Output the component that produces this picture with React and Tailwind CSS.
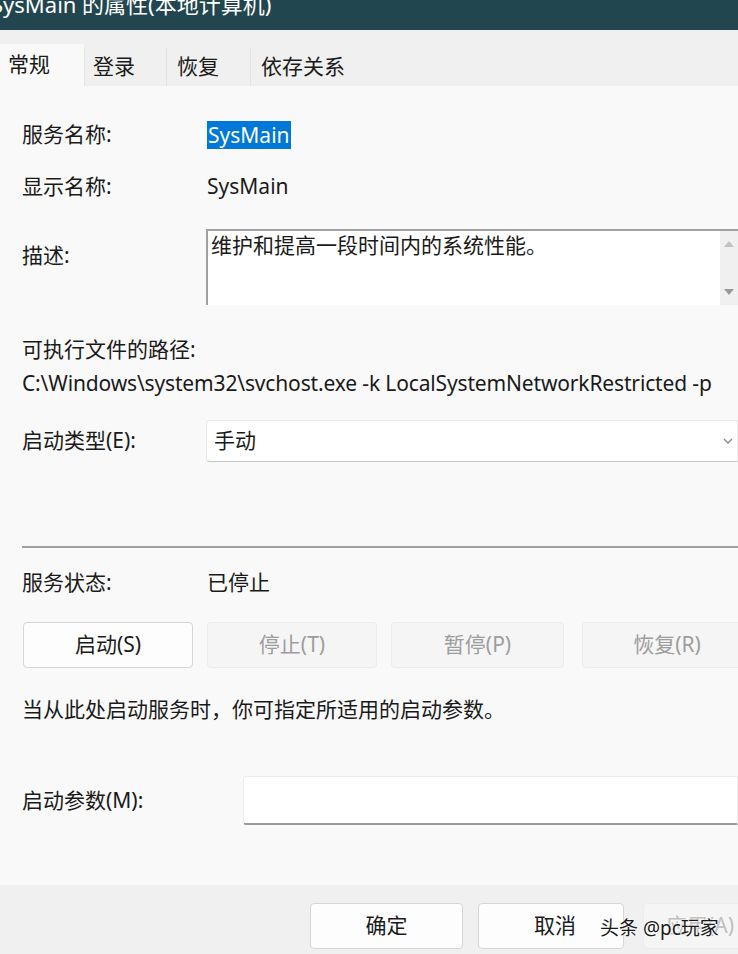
const font = { fontFamily: '"Noto Sans", "Noto Sans CJK SC", sans-serif' }

function Tab({ label, active, w, pl }) {
  return (
    <div
      className={
        active
          ? 'h-[42px] flex items-center bg-[#f9f9f9] text-[#1a1a1a] mt-[14px] self-start shrink-0'
          : 'h-[38px] flex items-center bg-[#f0f0f0] border-l border-[#e3e3e3] text-[#1a1a1a] mt-[18px] self-start shrink-0'
      }
      style={{ width: w, paddingLeft: pl }}
    >
      {label}
    </div>
  )
}

function Btn({ label, disabled, className }) {
  return (
    <div
      className={
        'h-[46px] shrink-0 flex items-center justify-center rounded-[4px] border ' +
        (disabled
          ? 'border-[#ececec] bg-[#f5f5f5] text-[#9d9d9d] '
          : 'border-[#d6d6d6] bg-[#fdfdfd] text-[#1a1a1a] ') +
        className
      }
    >
      {label}
    </div>
  )
}

export default function App() {
  return (
    <div className="w-[738px] h-[954px] overflow-hidden flex flex-col bg-[#f9f9f9] text-[21px] text-[#1a1a1a]" style={font}>
      <div className="h-[30px] bg-[#21464f] text-white overflow-hidden shrink-0">
        <div className="-mt-[14px] -ml-[9px] text-[22px] leading-[36px] whitespace-nowrap">SysMain 的属性(本地计算机)</div>
      </div>
      <div className="h-[56px] bg-[#f0f0f0] flex shrink-0">
        <Tab label="常规" active w={84} pl={8} />
        <Tab label="登录" w={82} pl={8} />
        <Tab label="恢复" w={84} pl={10} />
        <Tab label="依存关系" w={102} pl={10} />
      </div>

      <div className="flex-1 flex flex-col pl-[22px] overflow-hidden">
        <div className="flex items-center h-[28px] mt-[35px]">
          <div className="w-[185px]">服务名称:</div>
          <div className="bg-[#0078d7] text-white px-[1px] h-[28px] leading-[28px]">SysMain</div>
        </div>
        <div className="flex items-center h-[28px] mt-[24px]">
          <div className="w-[185px]">显示名称:</div>
          <div>SysMain</div>
        </div>
        <div className="flex mt-[28px]">
          <div className="w-[184px] pt-[11px]">描述:</div>
          <div className="flex-1 h-[76px] flex bg-white border-t-2 border-l-2 border-[#a0a0a0]">
            <div className="flex-1 pl-[3px] leading-[28px]">维护和提高一段时间内的系统性能。</div>
            <div className="w-[18px] bg-[#f0f0f0] flex flex-col items-center justify-between py-[10px]">
              <svg width="10" height="6" viewBox="0 0 10 6"><path d="M0 6 L5 0 L10 6 Z" fill="#c2c2c2" /></svg>
              <svg width="10" height="6" viewBox="0 0 10 6"><path d="M0 0 L5 6 L10 0 Z" fill="#9a9a9a" /></svg>
            </div>
          </div>
        </div>

        <div className="mt-[30px] leading-[28px]">可执行文件的路径:</div>
        <div className="mt-[6px] leading-[28px] whitespace-nowrap tracking-[-0.15px]">
          C:\Windows\system32\svchost.exe -k LocalSystemNetworkRestricted -p
        </div>

        <div className="flex items-center mt-[23px]">
          <div className="w-[184px]">启动类型(E):</div>
          <div className="flex-1 h-[42px] bg-white border border-[#e8e8e8] border-b-[#c4c4c4] rounded-l-[4px] flex items-center justify-between pl-[7px] pr-[4px]">
            <span>手动</span>
            <svg width="10" height="6" viewBox="0 0 10 6"><path d="M1 1 L5 5 L9 1" fill="none" stroke="#888" strokeWidth="1.3" /></svg>
          </div>
        </div>

        <div className="mt-[84px] h-[2px] bg-[#a0a0a0]" />

        <div className="flex items-center mt-[21px] h-[28px]">
          <div className="w-[185px]">服务状态:</div>
          <div>已停止</div>
        </div>

        <div className="flex mt-[25px]">
          <Btn label="启动(S)" className="w-[170px] ml-[1px]" />
          <Btn label="停止(T)" disabled className="w-[170px] ml-[14px]" />
          <Btn label="暂停(P)" disabled className="w-[173px] ml-[14px]" />
          <Btn label="恢复(R)" disabled className="w-[170px] ml-[18px]" />
        </div>

        <div className="mt-[27px] leading-[28px]">当从此处启动服务时，你可指定所适用的启动参数。</div>

        <div className="flex items-center mt-[53px]">
          <div className="w-[221px]">启动参数(M):</div>
          <div className="flex-1 h-[49px] bg-white border border-[#ececec] border-b-2 border-b-[#9a9a9a] rounded-l-[3px]" />
        </div>
      </div>

      <div className="h-[69px] bg-[#f0f0f0] shrink-0 flex items-start pt-[18px] relative overflow-hidden">
        <Btn label="确定" className="w-[153px] ml-[310px] border-[#4a9ad8]" />
        <Btn label="取消" className="w-[146px] ml-[15px] justify-start pl-[55px]" />
        <Btn label="应用(A)" disabled className="w-[120px] ml-[19px] justify-start pl-[22px] text-[#c0c0c0]" />
        <div className="absolute left-[600px] text-[19px] text-[#1a1a1a] whitespace-nowrap" style={{ top: 29, textShadow: '0 0 2px #fff, 0 0 2px #fff' }}>
          头条 @pc玩家
        </div>
      </div>
    </div>
  )
}
